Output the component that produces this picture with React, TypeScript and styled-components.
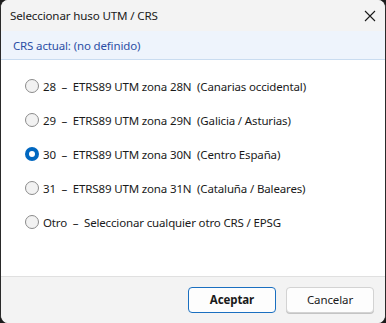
import React, { useState } from "react";
import styled, { createGlobalStyle } from "styled-components";

const Global = createGlobalStyle`
  html, body { margin: 0; padding: 0; background: #1c1c1c; }
  body { width: 386px; height: 323px; overflow: hidden; }
  * { box-sizing: border-box; }
`;

const Window = styled.div`
  width: 386px;
  height: 323px;
  background: #f3f3f3;
  border-radius: 8px;
  border-left: 1px solid #2a2a2a;
  border-right: 1px solid #2a2a2a;
  overflow: hidden;
  display: flex;
  flex-direction: column;
  font-family: "Segoe UI", "Noto Sans", sans-serif;
  font-size: 11.5px;
  letter-spacing: -0.15px;
  color: #1a1a1a;
`;

const TitleBar = styled.div`
  height: 31px;
  display: flex;
  align-items: center;
  justify-content: space-between;
  padding: 0 3px 0 9px;
  background: #f3f3f3;
`;

const Title = styled.span`
  font-size: 11.6px;
`;

const CloseBtn = styled.button`
  border: none;
  background: transparent;
  width: 24px;
  height: 24px;
  padding: 0;
  display: flex;
  align-items: center;
  justify-content: center;
`;

const InfoBar = styled.div`
  height: 29px;
  display: flex;
  align-items: center;
  padding-left: 12px;
  background: #eef4fc;
  border-bottom: 1px solid #c9dcf0;
  color: #2c4fa5;
`;

const Content = styled.div`
  flex: 1;
  background: #ffffff;
  display: flex;
  flex-direction: column;
  padding-top: 9px;
  border-bottom: 1px solid #e0e0e0;
`;

const Row = styled.label`
  height: 34px;
  display: flex;
  align-items: center;
  padding-left: 24px;
  gap: 4px;
  white-space: pre;
  cursor: default;
`;

const Radio = styled.span<{ $checked: boolean }>`
  width: 14px;
  height: 14px;
  border-radius: 50%;
  flex: none;
  display: flex;
  align-items: center;
  justify-content: center;
  background: ${(p) => (p.$checked ? "#0067c0" : "#f2f2f2")};
  border: ${(p) => (p.$checked ? "none" : "1px solid #8b8b8b")};
  &::after {
    content: "";
    display: ${(p) => (p.$checked ? "block" : "none")};
    width: 6px;
    height: 6px;
    border-radius: 50%;
    background: #ffffff;
  }
`;

const Footer = styled.div`
  height: 46px;
  display: flex;
  align-items: center;
  justify-content: flex-end;
  gap: 10px;
  padding-right: 11px;
  padding-bottom: 1px;
  background: #f3f3f3;
`;

const Button = styled.button<{ $primary?: boolean }>`
  width: 88px;
  height: 26px;
  border-radius: 4px;
  font-family: inherit;
  font-size: 11.5px;
  letter-spacing: -0.1px;
  color: #1a1a1a;
  font-weight: ${(p) => (p.$primary ? 700 : 400)};
  background: #fdfdfd;
  border: 1px solid ${(p) => (p.$primary ? "#1a6fc0" : "#d3d3d3")};
  box-shadow: ${(p) => (p.$primary ? "none" : "0 1px 0 #c4c4c4")};
`;

const options = [
  "28  \u2013  ETRS89 UTM zona 28N  (Canarias occidental)",
  "29  \u2013  ETRS89 UTM zona 29N  (Galicia / Asturias)",
  "30  \u2013  ETRS89 UTM zona 30N  (Centro Espa\u00f1a)",
  "31  \u2013  ETRS89 UTM zona 31N  (Catalu\u00f1a / Baleares)",
  "Otro  \u2013  Seleccionar cualquier otro CRS / EPSG",
];

export default function App() {
  const [sel, setSel] = useState(2);
  return (
    <>
      <Global />
      <Window>
        <TitleBar>
          <Title>Seleccionar huso UTM / CRS</Title>
          <CloseBtn aria-label="Cerrar">
            <svg width="12" height="12" viewBox="0 0 12 12">
              <path d="M1 1 L11 11 M11 1 L1 11" stroke="#1a1a1a" strokeWidth="1.1" />
            </svg>
          </CloseBtn>
        </TitleBar>
        <InfoBar>CRS actual: (no definido)</InfoBar>
        <Content>
          {options.map((o, i) => (
            <Row key={i} onClick={() => setSel(i)}>
              <Radio $checked={sel === i} />
              <span>{o}</span>
            </Row>
          ))}
        </Content>
        <Footer>
          <Button $primary>Aceptar</Button>
          <Button>Cancelar</Button>
        </Footer>
      </Window>
    </>
  );
}
